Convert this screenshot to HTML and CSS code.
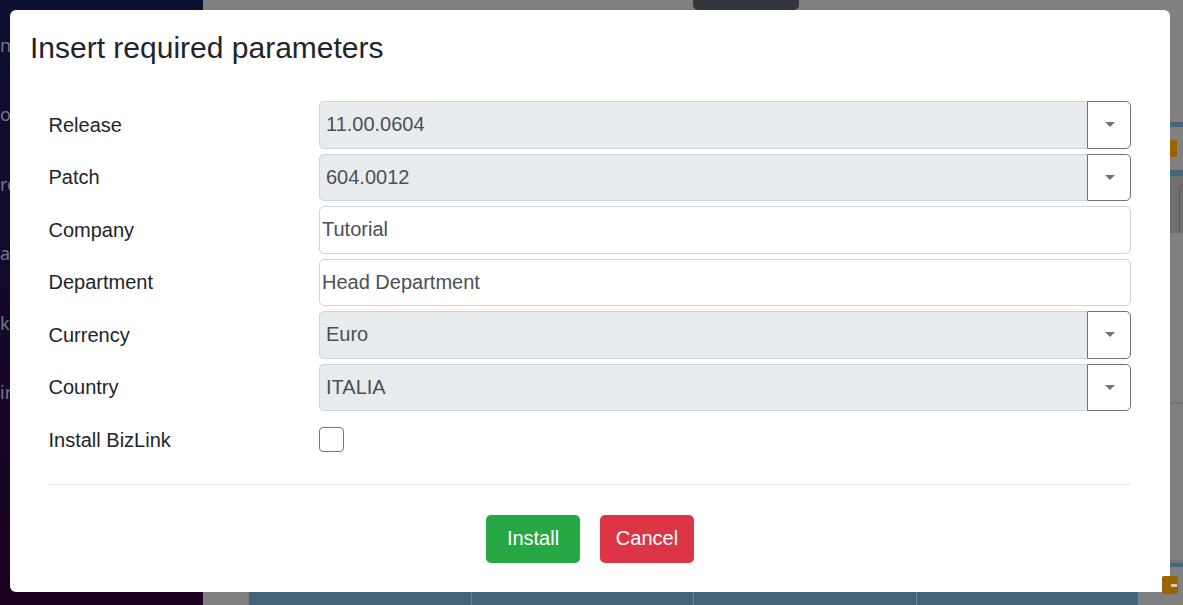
FILE: index.html
```html
<!DOCTYPE html>
<html lang="en">
<head>
<meta charset="utf-8">
<title>Insert required parameters</title>
<link rel="stylesheet" href="styles.css">
</head>
<body>
<div class="app">
  <aside class="sidebar">
    <ul class="nav">
      <li><span class="nav-text">n</span></li>
      <li><span class="nav-text">os</span></li>
      <li><span class="nav-text">ro</span></li>
      <li><span class="nav-text">al</span></li>
      <li><span class="nav-text">ke</span></li>
      <li><span class="nav-text">ir</span></li>
    </ul>
  </aside>
  <main class="main">
    <div class="gutter"></div>
    <div class="content">
      <div class="topbar"><div class="tab"></div></div>
      <div class="content-fill"></div>
      <div class="table-head">
        <div class="th"></div>
        <div class="th"></div>
        <div class="th"></div>
        <div class="th"></div>
      </div>
    </div>
    <div class="rail">
      <div class="rail-space s122"></div>
      <div class="strip h5"></div>
      <div class="rail-space s13"></div>
      <div class="badge"></div>
      <div class="rail-space s13"></div>
      <div class="strip h6"></div>
      <div class="shade"><div class="outline"></div></div>
      <div class="rail-space s169"></div>
      <div class="rule"></div>
      <div class="rail-fill"></div>
      <div class="darkbar"></div>
      <div class="strip h4"></div>
      <div class="rail-space s25"></div>
    </div>
  </main>
</div>

<div class="modal">
  <div class="modal-header">
    <h4 class="modal-title">Insert required parameters</h4>
  </div>
  <div class="modal-body">
    <div class="form-row">
      <label class="form-label">Release</label>
      <div class="select">
        <div class="select-value">11.00.0604</div>
        <div class="select-btn"><span class="caret"></span></div>
      </div>
    </div>
    <div class="form-row">
      <label class="form-label">Patch</label>
      <div class="select">
        <div class="select-value">604.0012</div>
        <div class="select-btn"><span class="caret"></span></div>
      </div>
    </div>
    <div class="form-row">
      <label class="form-label">Company</label>
      <div class="field">Tutorial</div>
    </div>
    <div class="form-row">
      <label class="form-label">Department</label>
      <div class="field">Head Department</div>
    </div>
    <div class="form-row">
      <label class="form-label">Currency</label>
      <div class="select">
        <div class="select-value">Euro</div>
        <div class="select-btn"><span class="caret"></span></div>
      </div>
    </div>
    <div class="form-row">
      <label class="form-label">Country</label>
      <div class="select">
        <div class="select-value">ITALIA</div>
        <div class="select-btn"><span class="caret"></span></div>
      </div>
    </div>
    <div class="form-row last">
      <label class="form-label">Install BizLink</label>
      <div class="check-wrap"><input type="checkbox" class="check"></div>
    </div>
    <hr class="divider">
  </div>
  <div class="modal-footer">
    <button class="btn btn-success">Install</button>
    <button class="btn btn-danger">Cancel</button>
  </div>
</div>

<div class="fab"><span class="fab-bar"></span></div>
</body>
</html>
```
FILE: styles.css
```css
* { box-sizing: border-box; }

html, body {
  margin: 0;
  padding: 0;
  width: 1183px;
  height: 605px;
  overflow: hidden;
  font-family: "Liberation Sans", Arial, sans-serif;
}

.app {
  display: flex;
  width: 1183px;
  height: 605px;
}

/* sidebar (dimmed by backdrop) */
.sidebar {
  flex: 0 0 203px;
  width: 203px;
  height: 605px;
  background: linear-gradient(180deg, #0c0f31 0%, #130a2c 45%, #1d0022 100%);
  overflow: hidden;
}
.nav {
  list-style: none;
  margin: 0;
  padding: 10px 0 0 0;
}
.nav li {
  height: 69.5px;
  display: flex;
  align-items: center;
  overflow: hidden;
}
.nav-text {
  font-family: "Noto Sans", "Open Sans", sans-serif;
  font-size: 18px;
  color: #75768c;
  white-space: nowrap;
}

/* main (dimmed) */
.main {
  flex: 1 1 auto;
  min-width: 0;
  display: grid;
  grid-template-columns: 46px 890px minmax(0, 1fr);
  background: #808080;
  height: 605px;
}
.content {
  display: flex;
  flex-direction: column;
  min-width: 0;
}
.topbar {
  height: 10px;
  display: flex;
}
.tab {
  margin-left: 444px;
  width: 106px;
  height: 10px;
  background: #33363b;
  border-radius: 0 0 5px 5px;
}
.content-fill { flex: 1; }
.table-head {
  height: 13px;
  display: grid;
  grid-template-columns: repeat(4, 1fr);
  background: #43657a;
}
.th { border-right: 1px solid #6b8597; }

.rail {
  display: flex;
  flex-direction: column;
  min-width: 0;
  overflow: hidden;
}
.rail-space.s122 { height: 122px; }
.rail-space.s13 { height: 13px; }
.rail-space.s169 { height: 169px; }
.rail-space.s25 { height: 38px; }
.rail-fill { flex: 1; }
.strip { background: #45677c; }
.strip.h5 { height: 5px; }
.strip.h6 { height: 6px; }
.strip.h4 { height: 4px; }
.badge {
  margin-left: 22px;
  width: 16px;
  height: 17px;
  background: #9a6400;
  border-radius: 2px;
}
.shade {
  height: 57px;
  background: #6f6f6f;
  padding: 8px 0 0 40px;
  overflow: hidden;
}
.outline {
  width: 20px;
  height: 60px;
  border: 1px solid #8e3c4c;
  border-radius: 5px;
}
.rule {
  height: 2px;
  background: #727272;
}
.darkbar {
  height: 3px;
  background: #737373;
}

/* modal */
.modal {
  position: fixed;
  top: 10px;
  left: 10px;
  width: 1160px;
  height: 582px;
  background: #fff;
  border-radius: 6px;
  z-index: 10;
  display: flex;
  flex-direction: column;
  color: #212529;
}
.modal-header {
  padding: 20px 20px 0 20px;
}
.modal-title {
  margin: 0;
  font-size: 30px;
  line-height: 36px;
  font-weight: 400;
  color: #212529;
}
.modal-body {
  padding: 35px 39px 0 37.5px;
}
.form-row {
  display: grid;
  grid-template-columns: 281.5px 1fr;
  height: 47.5px;
  margin-bottom: 5px;
  margin-left: -10px;
}
.form-row.last { margin-bottom: 0; }
.form-label {
  align-self: center;
  font-size: 20px;
  line-height: 30px;
  padding-left: 11px;
  color: #212529;
}
.field {
  height: 47.5px;
  border: 1px solid #ced4da;
  border-radius: 5px;
  padding: 0 2px;
  display: flex;
  align-items: center;
  font-size: 20px;
  color: #495057;
  background: #fff;
}
.select {
  display: flex;
  height: 47.5px;
}
.select-value {
  flex: 1;
  display: flex;
  align-items: center;
  background: #e9ecef;
  border: 1px solid #ced4da;
  border-right: none;
  border-radius: 5px 0 0 5px;
  padding-left: 6px;
  font-size: 20px;
  color: #495057;
}
.select-btn {
  width: 44px;
  border: 1px solid #6c757d;
  border-radius: 0 5px 5px 0;
  background: #fff;
  display: flex;
  align-items: center;
  justify-content: center;
}
.caret {
  width: 0;
  height: 0;
  border-left: 5px solid transparent;
  border-right: 5px solid transparent;
  border-top: 5px solid #6c757d;
  margin-left: 1px;
}
.check-wrap {
  display: flex;
  align-items: center;
}
.check {
  -webkit-appearance: none;
  appearance: none;
  margin: 0;
  width: 25px;
  height: 25px;
  border: 1px solid #767676;
  border-radius: 4px;
  background: #fff;
}
.divider {
  margin: 20px 0 0 0;
  border: 0;
  border-top: 1px solid #e5e5e5;
  height: 0;
}
.modal-footer {
  display: flex;
  justify-content: center;
  gap: 20px;
  padding-top: 30px;
}
.btn {
  width: 94px;
  height: 48px;
  border: none;
  border-radius: 5px;
  font-family: "Liberation Sans", Arial, sans-serif;
  font-size: 20px;
  color: #fff;
  padding: 0;
}
.btn-success { background: #28a745; }
.btn-danger { background: #dc3545; }

/* floating button over everything */
.fab {
  position: fixed;
  left: 1162px;
  top: 576px;
  width: 16px;
  height: 18px;
  background: #9a6400;
  border-radius: 2px;
  z-index: 20;
  display: flex;
  align-items: center;
  justify-content: flex-end;
}
.fab-bar {
  width: 6px;
  height: 3px;
  background: #d9cbb0;
  margin-right: 1px;
}
```
